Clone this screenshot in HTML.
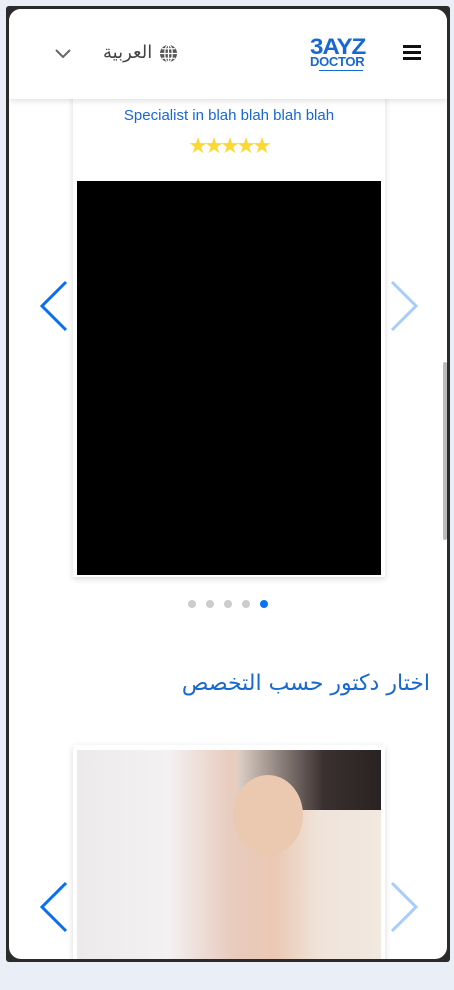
<!DOCTYPE html>
<html><head><meta charset="utf-8"><style>
*{margin:0;padding:0;box-sizing:border-box}
body{width:454px;height:990px;background:#e9eef7;position:relative;overflow:hidden;font-family:"Liberation Sans","Noto Sans CJK SC",sans-serif}
.frame{position:absolute;left:6px;top:6px;width:444px;height:956px;background:#2b2b2b;border-radius:3px}
.screen{position:absolute;left:9px;top:9px;width:438px;height:950px;background:#fff;border-radius:12px;overflow:hidden}
.hdr{position:absolute;left:0;top:0;width:438px;height:90px;background:#fff;box-shadow:0 2px 6px rgba(0,0,0,.12);z-index:3}
.card{position:absolute;left:64px;width:312px;background:#fff;box-shadow:0 2px 6px rgba(0,0,0,.15)}
.dot{position:absolute;top:591px;width:8px;height:8px;border-radius:50%;background:#ccc}
</style></head><body>
<div class="frame"></div>
<div class="screen">
 <div class="hdr">
  <svg style="position:absolute;left:45px;top:38px" width="18" height="12" viewBox="0 0 18 12"><path d="M2 3l7 7 7-7" fill="none" stroke="#666" stroke-width="2"/></svg>
  <div style="position:absolute;left:94px;top:33px;font-size:18px;color:#444;font-family:'DejaVu Sans',sans-serif">العربية</div>
  <svg style="position:absolute;left:150px;top:35px" width="19" height="19" viewBox="0 0 20 20"><circle cx="10" cy="10" r="9" fill="#555"/><g fill="none" stroke="#fff" stroke-width="1.3"><ellipse cx="10" cy="10" rx="4" ry="9"/><path d="M1 10h18M3 5h14M3 15h14M10 1v18"/></g></svg>
  <div style="position:absolute;left:301px;top:28px;color:#1768d0;font-weight:bold;font-size:22px;line-height:19px;letter-spacing:-1px;transform:scaleX(1.1);transform-origin:left">3AYZ</div>
  <div style="position:absolute;left:301px;top:47px;color:#1768d0;font-weight:bold;font-size:13px;line-height:12px;letter-spacing:-0.3px">DOCTOR</div>
  <div style="position:absolute;left:310px;top:61px;width:44px;height:1px;background:#1768d0"></div>
  <div style="position:absolute;left:394px;top:36px;width:18px;height:3px;background:#111;box-shadow:0 6px 0 #111,0 12px 0 #111"></div>
 </div>
 <div class="card" style="top:50px;height:518px">
  <div style="position:absolute;top:48px;width:100%;text-align:center;color:#1768d0;font-size:15px">Specialist in blah blah blah blah</div>
  <div style="position:absolute;top:73px;width:100%;text-align:center;color:#fdd835;font-size:18px;letter-spacing:-2px">★★★★★</div>
  <div style="position:absolute;left:4px;top:122px;width:304px;height:394px;background:#000"></div>
 </div>
 <svg style="position:absolute;left:30px;top:271px" width="30" height="54"><path d="M27 2L3 26l24 24" fill="none" stroke="#0a6ef0" stroke-width="3"/></svg>
 <svg style="position:absolute;left:380px;top:271px" width="30" height="54"><path d="M3 2l24 24L3 50" fill="none" stroke="#a6cdfb" stroke-width="3"/></svg>
 <div class="dot" style="left:179px"></div><div class="dot" style="left:197px"></div><div class="dot" style="left:215px"></div><div class="dot" style="left:233px"></div><div class="dot" style="left:251px;background:#0a74f0"></div>
 <div style="position:absolute;right:17px;top:662px;color:#1768d0;font-size:22px;font-family:'DejaVu Sans',sans-serif;direction:rtl">اختار دكتور حسب التخصص</div>
 <div class="card" style="top:736px;height:230px">
  <div style="position:absolute;left:4px;top:5px;width:304px;height:230px;background:linear-gradient(90deg,#eceaea 0%,#f3f1f1 30%,#e8ccc0 50%,#eac8b3 65%,#f0e4da 80%,#f1e8e0 100%)"></div>
  <div style="position:absolute;left:165px;top:5px;width:143px;height:60px;background:linear-gradient(90deg,#ded0c6,#3a3030 60%,#2a2222)"></div>
  <div style="position:absolute;left:160px;top:30px;width:70px;height:80px;border-radius:50%;background:#ebc8b0"></div>
 </div>
 <svg style="position:absolute;left:30px;top:872px" width="30" height="54"><path d="M27 2L3 26l24 24" fill="none" stroke="#0a6ef0" stroke-width="3"/></svg>
 <svg style="position:absolute;left:380px;top:872px" width="30" height="54"><path d="M3 2l24 24L3 50" fill="none" stroke="#a6cdfb" stroke-width="3"/></svg>
 <div style="position:absolute;left:434px;top:353px;width:4px;height:178px;background:#bbb;border-radius:2px"></div>
</div>
</body></html>
